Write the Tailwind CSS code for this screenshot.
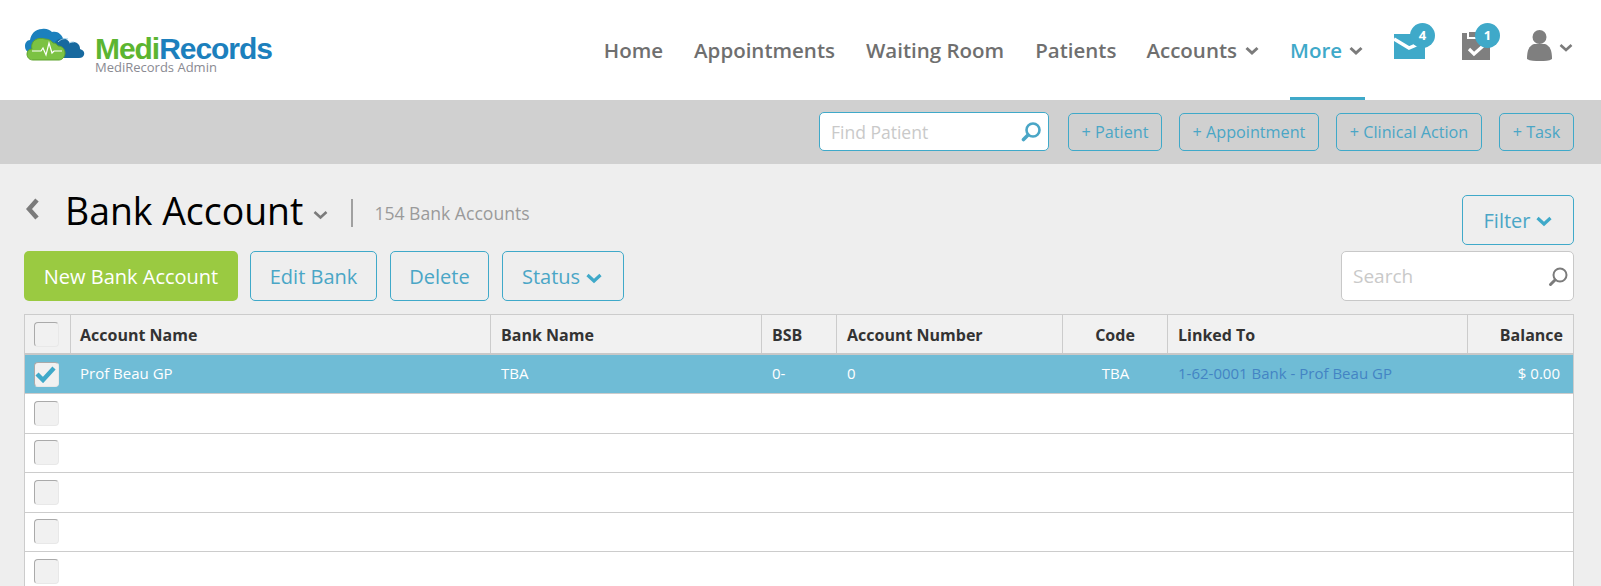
<!DOCTYPE html>
<html>
<head>
<meta charset="utf-8">
<script src="https://cdn.jsdelivr.net/npm/@tailwindcss/browser@4"></script>
</head>
<body class="m-0 h-[586px] w-[1601px] overflow-hidden bg-[#eeeeee] font-['Open_Sans',sans-serif]">
<header class="flex h-[100px] items-start bg-white">
  <div class="ml-[25px] mt-[28px] flex items-start">
    <svg class="h-[33px] w-[60px]" viewBox="0 0 60 33">
      <path d="M6 25c-4-1-6-3-6-7 0-3 2-6 5-6 1-6 5-11 12-11 4-1 8 1 10 3 3-1 7 0 9 3 1 1 2 3 2 4L40 25z" fill="#1b80bd"/>
      <path d="M30 14c3-4 7-4 11-3 2 1 3 3 4 4 3-2 7-1 9 2 1 2 1 3 1 4 3 1 5 3 4 6-1 2-2 3-5 3H36z" fill="#17699f"/>
      <path d="M33 14c3-3 6-4 10-3M44 15c2-1 3-1 5-1" fill="none" stroke="#9fd0ea" stroke-width="1"/>
      <path d="M8 32c-4 0-6-3-6-6s2-5 5-5c-1-3 0-7 3-9 3-2 7-2 10-1 3 0 6 1 8 4 2 0 4 1 5 3 4 0 7 3 7 7s-3 7-6 7z" fill="#7cc243" stroke="#5fa32f" stroke-width="1"/>
      <path d="M7 23h9l2-3 3 7 3-12 3 10 2-2h8" fill="none" stroke="#fff" stroke-width="1.2"/>
    </svg>
    <div class="ml-[10px] mt-[9px] flex flex-col">
      <div class="font-['Liberation_Sans',sans-serif] text-[30px] font-bold leading-[23px] tracking-[-1.05px]"><span class="text-[#5cb531]">Medi</span><span class="text-[#1c80bd]">Records</span></div>
      <div class="text-[13px] leading-[14px] text-[#8a8a92]">MediRecords Admin</div>
    </div>
  </div>
  <nav class="ml-auto flex h-[100px] items-start text-[20.5px] font-semibold text-[#6f6f6f]">
    <a class="mt-[35px] leading-[30px]">Home</a>
    <a class="ml-[31px] mt-[35px] leading-[30px]">Appointments</a>
    <a class="ml-[31px] mt-[35px] leading-[30px]">Waiting Room</a>
    <a class="ml-[31px] mt-[35px] leading-[30px]">Patients</a>
    <a class="ml-[30px] mt-[35px] flex items-center leading-[30px]">Accounts
      <svg class="ml-[8px] mt-[2px] h-[10px] w-[14px]" viewBox="0 0 14 10"><path d="M1.5 2l5.5 5 5.5-5" fill="none" stroke="#7b7b7b" stroke-width="3"/></svg>
    </a>
    <a class="ml-[31px] flex h-[100px] w-[75px] items-start border-b-[3px] border-[#3fa9c9] pt-[35px] leading-[30px] text-[#3fa9c9]">More
      <svg class="ml-[7px] mt-[11px] h-[10px] w-[14px]" viewBox="0 0 14 10"><path d="M1.5 2l5.5 5 5.5-5" fill="none" stroke="#7b7b7b" stroke-width="3"/></svg>
    </a>
    <div class="relative ml-[29px] mt-[34px] h-[25px] w-[31px]">
      <svg class="h-[25px] w-[31px]" viewBox="0 0 31 25"><path d="M0 0h31v25H0z" fill="#3fa9c9"/><path d="M0 5l15 9 16-7" fill="none" stroke="#fff" stroke-width="3.5"/></svg>
      <span class="absolute left-[16px] top-[-11px] flex h-[25px] w-[25px] items-center justify-center rounded-full bg-[#3fa9c9] text-[13px] font-bold leading-none text-white">4</span>
    </div>
    <div class="relative ml-[37px] mt-[32px] h-[28px] w-[28px]">
      <svg class="h-[28px] w-[28px]" viewBox="0 0 28 28"><path d="M0 1h5v6h18V1h5v27H0z" fill="#7f7f7f"/><path d="M7 0h14v5H7z" fill="#7f7f7f"/><path d="M7 17l5 5 9-8" fill="none" stroke="#fff" stroke-width="3.2"/></svg>
      <span class="absolute left-[13px] top-[-9px] flex h-[25px] w-[25px] items-center justify-center rounded-full bg-[#3fa9c9] text-[13px] font-bold leading-none text-white">1</span>
    </div>
    <div class="ml-[37px] mr-[28px] mt-[30px] flex items-start">
      <svg class="h-[31px] w-[25px]" viewBox="0 0 25 31"><circle cx="12.5" cy="7" r="7" fill="#7f7f7f"/><path d="M0 29c0-9 2-13 7-15h11c5 2 7 6 7 15-3 2-7 2-12 2s-10 0-13-2z" fill="#7f7f7f"/></svg>
      <svg class="ml-[7px] mt-[13px] h-[10px] w-[14px]" viewBox="0 0 14 10"><path d="M1.5 2l5.5 5 5.5-5" fill="none" stroke="#7b7b7b" stroke-width="2.6"/></svg>
    </div>
  </nav>
</header>
<div class="flex h-[64px] items-start justify-end bg-[#d0d0d0] pr-[27px] pt-[13px] text-[16.2px] text-[#4aa6c6]">
  <div class="mr-[19px] mt-[-1px] flex h-[39px] w-[230px] items-center justify-between rounded-[5px] border border-[#3fa9c9] bg-white pl-[11px] pr-[6px] text-[#c9c9c9]">
    <span class="mt-[1px] text-[17.5px]">Find Patient</span>
    <svg class="h-[21px] w-[21px]" viewBox="0 0 21 21"><circle cx="12" cy="9" r="6.5" fill="none" stroke="#4aa6c6" stroke-width="2.6"/><path d="M7 14l-4.5 4.5" stroke="#4aa6c6" stroke-width="3.6" stroke-linecap="round"/></svg>
  </div>
  <div class="flex h-[38px] w-[94px] items-center justify-center rounded-[5px] border border-[#3fa9c9]">+ Patient</div>
  <div class="ml-[17px] flex h-[38px] w-[140px] items-center justify-center rounded-[5px] border border-[#3fa9c9]">+ Appointment</div>
  <div class="ml-[17px] flex h-[38px] w-[146px] items-center justify-center rounded-[5px] border border-[#3fa9c9]">+ Clinical Action</div>
  <div class="ml-[17px] flex h-[38px] w-[75px] items-center justify-center rounded-[5px] border border-[#3fa9c9]">+ Task</div>
</div>
<main class="pl-[24px] pr-[27px]">
  <div class="flex h-[87px] items-start justify-between">
    <div class="flex items-center pt-[24px]">
      <svg class="ml-[2px] mt-[-4px] h-[22px] w-[14px]" viewBox="0 0 14 22"><path d="M11 2L3 11l8 9" fill="none" stroke="#7b7b7b" stroke-width="4.5"/></svg>
      <h1 class="ml-[25px] text-[37.4px] font-normal leading-[46px] text-black">Bank Account</h1>
      <svg class="ml-[10px] mt-[7px] h-[10px] w-[15px]" viewBox="0 0 15 10"><path d="M1.5 2l6 5.5 6-5.5" fill="none" stroke="#7b7b7b" stroke-width="2.6"/></svg>
      <span class="ml-[23px] mt-[4px] h-[28px] w-[2px] bg-[#a0a0a0]"></span>
      <span class="ml-[21px] mt-[4px] text-[17.6px] text-[#9a9a9a]">154 Bank Accounts</span>
    </div>
    <button class="mt-[31px] flex h-[50px] w-[112px] items-center justify-center rounded-[5px] border border-[#3fa9c9] text-[20px] text-[#4aa6c6]"><span class="mt-[1px]">Filter</span>
      <svg class="ml-[6px] mt-[3px] h-[11px] w-[16px]" viewBox="0 0 16 11"><path d="M1.5 2l6.5 6 6.5-6" fill="none" stroke="#3fa9c9" stroke-width="3.2"/></svg>
    </button>
  </div>
  <div class="flex h-[63px] items-start text-[20px] text-[#4aa6c6]">
    <button class="flex h-[50px] w-[214px] items-center justify-center rounded-[5px] bg-[#9aca41] pt-[1px] text-white">New Bank Account</button>
    <button class="ml-[12px] flex h-[50px] w-[127px] items-center justify-center rounded-[5px] border border-[#3fa9c9] pt-[1px]">Edit Bank</button>
    <button class="ml-[13px] flex h-[50px] w-[99px] items-center justify-center rounded-[5px] border border-[#3fa9c9] pt-[1px]">Delete</button>
    <button class="ml-[13px] flex h-[50px] w-[122px] items-center justify-center rounded-[5px] border border-[#3fa9c9] pt-[1px] pr-[2px]">Status
      <svg class="ml-[6px] mt-[3px] h-[11px] w-[16px]" viewBox="0 0 16 11"><path d="M1.5 2l6.5 6 6.5-6" fill="none" stroke="#3fa9c9" stroke-width="3.2"/></svg>
    </button>
    <div class="ml-auto flex h-[50px] w-[233px] items-center justify-between rounded-[5px] border border-[#c8c8c8] bg-white pl-[11px] pr-[4px] text-[19px] text-[#c9c9c9]">
      <span class="mt-[1px]">Search</span>
      <svg class="h-[21px] w-[21px]" viewBox="0 0 21 21"><circle cx="12" cy="9" r="6.5" fill="none" stroke="#7b7b7b" stroke-width="2"/><path d="M7 14l-4.5 4.5" stroke="#7b7b7b" stroke-width="3" stroke-linecap="round"/></svg>
    </div>
  </div>
  <div class="w-[1550px] border-x border-t border-[#cccccc] bg-white text-[15px]">
    <div class="grid h-[40px] grid-cols-[46px_420px_271px_75px_226px_105px_300px_1fr] items-center border-b-2 border-[#c8c8c8] bg-[#f1f1f1] text-[16px] font-bold text-[#333333]">
      <div class="flex h-full items-center border-r border-[#cccccc] pl-[9px]"><span class="h-[25px] w-[25px] rounded-[4px] border border-[#e8e8e8] border-l-[#aaaaaa] border-t-[#aaaaaa] bg-[#f1f1f1]"></span></div>
      <div class="flex h-full items-center border-r border-[#cccccc] pl-[9px] pt-[2px]">Account Name</div>
      <div class="flex h-full items-center border-r border-[#cccccc] pl-[10px] pt-[2px]">Bank Name</div>
      <div class="flex h-full items-center border-r border-[#cccccc] pl-[10px] pt-[2px]">BSB</div>
      <div class="flex h-full items-center border-r border-[#cccccc] pl-[10px] pt-[2px]">Account Number</div>
      <div class="flex h-full items-center justify-center border-r border-[#cccccc] pt-[2px]">Code</div>
      <div class="flex h-full items-center border-r border-[#cccccc] pl-[10px] pt-[2px]">Linked To</div>
      <div class="flex h-full items-center justify-end pr-[10px] pt-[2px]">Balance</div>
    </div>
    <div class="grid h-[39.4px] grid-cols-[46px_420px_271px_75px_226px_105px_300px_1fr] items-center border-b border-[#cccccc] bg-[#6fbcd6] pb-[2px] text-white">
      <div class="flex pl-[9px] pt-[2px]"><span class="flex h-[25px] w-[25px] items-center justify-center rounded-[4px] border border-[#e8e8e8] border-l-[#aaaaaa] border-t-[#aaaaaa] bg-[#f1f1f1]"><svg class="ml-[-3px] h-[18px] w-[23px] shrink-0" viewBox="0 0 23 18"><path d="M3 9l6 6L20 3" fill="none" stroke="#3fa9c9" stroke-width="4.4"/></svg></span></div>
      <div class="pl-[9px]">Prof Beau GP</div>
      <div class="pl-[10px]">TBA</div>
      <div class="pl-[10px]">0-</div>
      <div class="pl-[10px]">0</div>
      <div class="text-center">TBA</div>
      <div class="pl-[10px] text-[#4384c4]">1-62-0001 Bank - Prof Beau GP</div>
      <div class="pr-[13px] text-right">$ 0.00</div>
    </div>
    <div class="flex h-[39.4px] items-center border-b border-[#cccccc] pl-[9px]"><span class="h-[25px] w-[25px] rounded-[4px] border border-[#e8e8e8] border-l-[#aaaaaa] border-t-[#aaaaaa] bg-[#f1f1f1]"></span></div>
    <div class="flex h-[39.4px] items-center border-b border-[#cccccc] pl-[9px]"><span class="h-[25px] w-[25px] rounded-[4px] border border-[#e8e8e8] border-l-[#aaaaaa] border-t-[#aaaaaa] bg-[#f1f1f1]"></span></div>
    <div class="flex h-[39.4px] items-center border-b border-[#cccccc] pl-[9px]"><span class="h-[25px] w-[25px] rounded-[4px] border border-[#e8e8e8] border-l-[#aaaaaa] border-t-[#aaaaaa] bg-[#f1f1f1]"></span></div>
    <div class="flex h-[39.4px] items-center border-b border-[#cccccc] pl-[9px]"><span class="h-[25px] w-[25px] rounded-[4px] border border-[#e8e8e8] border-l-[#aaaaaa] border-t-[#aaaaaa] bg-[#f1f1f1]"></span></div>
    <div class="flex h-[39.4px] items-center border-b border-[#cccccc] pl-[9px]"><span class="h-[25px] w-[25px] rounded-[4px] border border-[#e8e8e8] border-l-[#aaaaaa] border-t-[#aaaaaa] bg-[#f1f1f1]"></span></div>
  </div>
</main>
</body>
</html>
